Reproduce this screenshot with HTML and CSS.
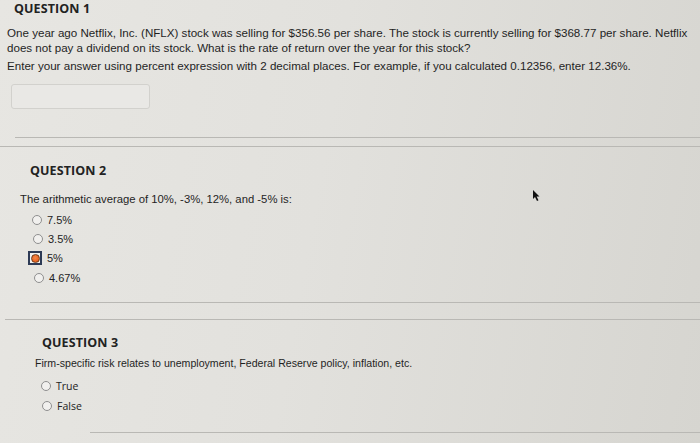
FILE: index.html
```html
<!DOCTYPE html>
<html>
<head>
<meta charset="utf-8">
<link rel="stylesheet" href="styles.css">
</head>
<body>
<div class="page">
  <section class="q q1">
    <h2 class="qtitle">QUESTION 1</h2>
    <p class="qtext">One year ago Netflix, Inc. (NFLX) stock was selling for $356.56 per share. The stock is currently selling for $368.77 per share. Netflix does not pay a dividend on its stock. What is the rate of return over the year for this stock?</p>
    <p class="qtext hint">Enter your answer using percent expression with 2 decimal places. For example, if you calculated 0.12356, enter 12.36%.</p>
    <div class="answer"></div>
  </section>
  <div class="rule r1a"></div>
  <div class="rule r1b"></div>

  <section class="q q2">
    <h2 class="qtitle">QUESTION 2</h2>
    <p class="qtext">The arithmetic average of 10%, -3%, 12%, and -5% is:</p>
    <ul class="opts">
      <li class="opt"><span class="radio"></span>7.5%</li>
      <li class="opt"><span class="radio"></span>3.5%</li>
      <li class="opt sel"><span class="focus"><span class="radio on"></span></span>5%</li>
      <li class="opt"><span class="radio"></span>4.67%</li>
    </ul>
    <span class="cursor"><svg width="9" height="12" viewBox="0 0 9 12"><path d="M1 0 L1 9 L3 7 L5 11 L6.5 10.3 L4.6 6.5 L7.5 6.5 Z" fill="#111"/></svg></span>
  </section>
  <div class="rule r2a"></div>
  <div class="rule r2b"></div>

  <section class="q q3">
    <h2 class="qtitle">QUESTION 3</h2>
    <p class="qtext">Firm-specific risk relates to unemployment, Federal Reserve policy, inflation, etc.</p>
    <ul class="opts">
      <li class="opt"><span class="radio"></span>True</li>
      <li class="opt"><span class="radio"></span>False</li>
    </ul>
  </section>
  <div class="rule r3a"></div>
</div>
</body>
</html>
```

FILE: styles.css
```css
html, body {
  margin: 0;
  padding: 0;
}
body {
  width: 700px;
  height: 443px;
  overflow: hidden;
  background: linear-gradient(100deg, #e7e6e2 0%, #e2e1dd 45%, #d6d5d0 100%);
  font-family: "Liberation Sans", Arial, sans-serif;
  color: #1f1f1f;
}
.page {
  position: relative;
}
.q {
  position: relative;
}
.qtitle {
  margin: 0;
  font-family: "Open Sans", "Liberation Sans", sans-serif;
  font-weight: 700;
  font-size: 12.5px;
  line-height: 16px;
  color: #222;
  letter-spacing: 0.1px;
}
.qtext {
  margin: 0;
  font-size: 11.3px;
  line-height: 14.5px;
}
.q1 {
  padding: 1px 4px 0 7px;
}
.q1 .qtext {
  font-size: 11.6px;
}
.q1 .qtitle {
  padding-left: 7px;
  margin-bottom: 9px;
}
.q1 .hint {
  margin-top: 4px;
}
.answer {
  margin: 10px 0 0 4px;
  width: 137px;
  height: 23px;
  border: 1px solid #d2d1cd;
  border-radius: 3px;
  background: #e9e8e5;
}
.rule {
  height: 1px;
  background: #b9b8b4;
}
.r1a {
  margin: 28px 0 0 15px;
}
.r1b {
  margin: 8px 0 0 0;
}
.q2 {
  padding: 16px 0 0 20px;
}
.q2 .qtitle {
  padding-left: 10px;
  margin-bottom: 13px;
}
.opts {
  list-style: none;
  margin: 4px 0 0 0;
  padding: 0;
}
.opt {
  display: flex;
  align-items: center;
  height: 19.3px;
  font-size: 11px;
  color: #222;
}
.radio {
  display: inline-block;
  box-sizing: border-box;
  width: 10px;
  height: 10px;
  border: 1px solid #8f8f8f;
  border-radius: 50%;
  background: #f1f0ee;
  margin-right: 5px;
}
.q2 .opt {
  padding-left: 12px;
}
.q2 .opt:nth-child(2) {
  padding-left: 13px;
}
.q2 .opt:nth-child(4) {
  padding-left: 14px;
}
.q2 .sel {
  padding-left: 8px;
}
.focus {
  display: inline-flex;
  align-items: center;
  justify-content: center;
  box-sizing: border-box;
  width: 14px;
  height: 14px;
  border: 2px solid #2d3a55;
  margin-right: 5px;
  background: #f3f2f0;
}
.radio.on {
  margin: 0;
  width: 9px;
  height: 9px;
  border: 1px solid #6b3a1a;
  background: radial-gradient(circle at 45% 40%, #f6884a 0%, #e8621e 70%);
}
.cursor {
  position: absolute;
  left: 532px;
  top: 41px;
}
.r2a {
  margin: 15px 0 0 30px;
}
.r2b {
  margin: 16px 0 0 5px;
}
.q3 {
  padding: 15px 0 0 35px;
}
.q3 .qtitle {
  padding-left: 7px;
  margin-bottom: 5px;
}
.q3 .qtext {
  font-size: 10.6px;
}
.q3 .opts {
  margin-top: 6px;
}
.q3 .opt {
  padding-left: 6px;
  font-size: 10.5px;
  font-family: "Open Sans", "Liberation Sans", sans-serif;
}
.q3 .opt:nth-child(2) {
  padding-left: 7px;
}
.r3a {
  margin: 17px 0 0 90px;
}
```
